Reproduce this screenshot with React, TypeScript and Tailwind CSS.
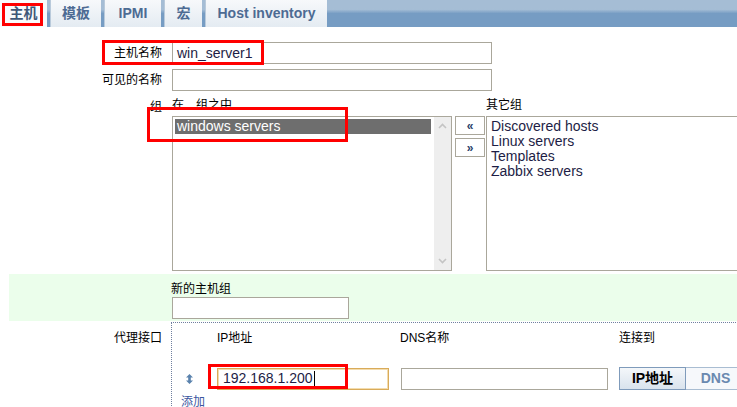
import React from 'react';

const tabs = [
  { label: '主机', w: 'w-[47px]', active: true },
  { label: '模板', w: 'w-[51px]' },
  { label: 'IPMI', w: 'w-[57px]' },
  { label: '宏', w: 'w-[38px]' },
  { label: 'Host inventory', w: 'w-[122px]' },
];

const otherGroups = ['Discovered hosts', 'Linux servers', 'Templates', 'Zabbix servers'];

function Chevron({ up }: { up?: boolean }) {
  return (
    <svg width="9" height="6" viewBox="0 0 9 6" className="block">
      <path d={up ? 'M1 5 L4.5 1.5 L8 5' : 'M1 1 L4.5 4.5 L8 1'} fill="none" stroke="#c4c4c4" strokeWidth="1.6" />
    </svg>
  );
}

function SortHandle() {
  return (
    <svg width="7" height="10" viewBox="0 0 7 10" className="block">
      <path d="M3.5 0 L7 3.5 L0 3.5 Z M3.5 10 L7 6.5 L0 6.5 Z" fill="#5a82ad" />
      <rect x="2.2" y="3" width="2.6" height="4" fill="#5a82ad" />
    </svg>
  );
}

function RedBox({ className }: { className: string }) {
  return <div className={`pointer-events-none absolute border-[3px] border-[#ff0000] ${className}`} />;
}

export default function App() {
  return (
    <div className="relative w-[737px] h-[407px] overflow-hidden bg-white text-black font-['Liberation_Sans','Noto_Sans_CJK_SC',sans-serif]">
      {/* tab bar */}
      <div className="flex h-[27px] bg-linear-to-b from-[#a5bdd5] from-35% to-[#769cc3] to-50%">
        {tabs.map((t, i) => (
          <div
            key={t.label}
            className={`${t.w} shrink-0 ${i > 0 ? 'ml-[3px]' : ''} flex items-center justify-center text-[14px] font-bold ${
              t.active
                ? 'bg-[#f9fbfc] text-[#3f5878]'
                : 'bg-linear-to-b from-[#f7f9fb] to-[#e4ebf2] text-[#4d6b93] border-l border-[#b9cadb]'
            }`}
          >
            {t.label}
          </div>
        ))}
      </div>

      <div className="pt-[15px] text-[12px]">
        {/* host name */}
        <div className="flex items-center h-[22px]">
          <div className="w-[162px] shrink-0 text-right">主机名称</div>
          <div className="ml-[10px] w-[320px] h-[22px] border border-[#aaa79b] flex items-center pl-[4px] text-[14px] text-[#1d1d45]">
            win_server1
          </div>
        </div>

        {/* visible name */}
        <div className="mt-[5px] flex items-center h-[22px]">
          <div className="w-[162px] shrink-0 text-right">可见的名称</div>
          <div className="ml-[10px] w-[320px] h-[22px] border border-[#aaa79b]" />
        </div>

        {/* groups */}
        <div className="mt-[6px] flex">
          <div className="w-[162px] shrink-0 text-right leading-[16px] pt-[2px]">组</div>
          <div className="ml-[10px] flex shrink-0">
            <div className="w-[280px] shrink-0">
              <div className="leading-[16px]">在　组之中</div>
              <div className="mt-[3px] h-[155px] border border-[#aaa79b] flex">
                <div className="flex-1 pt-[2px] pl-[2px] pr-[3px]">
                  <div className="h-[15px] bg-[#6e6e6e] text-white text-[14px] leading-[15px] pl-[2px]">windows servers</div>
                </div>
                <div className="w-[17px] bg-[#eeeeee] flex flex-col items-center justify-between py-[6px]">
                  <Chevron up />
                  <Chevron />
                </div>
              </div>
            </div>
            <div className="ml-[3px] mt-[19px] flex flex-col gap-[3px] shrink-0">
              <div className="w-[30px] h-[19px] border border-[#aaa79b] flex items-center justify-center text-[12px] font-bold text-[#2a3f6a]">«</div>
              <div className="w-[30px] h-[19px] border border-[#aaa79b] flex items-center justify-center text-[12px] font-bold text-[#2a3f6a]">»</div>
            </div>
            <div className="ml-[2px] shrink-0 -translate-x-[1px]">
              <div className="leading-[16px]">其它组</div>
              <div className="mt-[3px] w-[260px] h-[155px] border border-[#aaa79b] pl-[4px] pt-[2px] text-[14px] leading-[15px] text-[#1d1d45]">
                {otherGroups.map((g) => (
                  <div key={g}>{g}</div>
                ))}
              </div>
            </div>
          </div>
        </div>

        {/* new host group */}
        <div className="mt-[3px] ml-[9px] h-[47px] bg-[#ebfeeb] pl-[162px] pt-[8px]">
          <div className="leading-[15px]">新的主机组</div>
          <div className="w-[177px] h-[22px] border border-[#aaa79b] bg-white ml-[1px]" />
        </div>

        {/* agent interfaces */}
        <div className="mt-[1px] flex">
          <div className="w-[162px] shrink-0 text-right pt-[8px] leading-[16px]">代理接口</div>
          <div className="ml-[9px] flex-1 border-t border-l border-dotted border-[#6f7f9f]">
            <div className="grid grid-cols-[45px_184px_218px_1fr] pt-[7px] leading-[16px]">
              <div />
              <div>IP地址</div>
              <div className="-ml-[1px]">DNS名称</div>
              <div>连接到</div>
            </div>
            <div className="mt-[21px] grid grid-cols-[45px_184px_218px_1fr] items-center">
              <div className="pl-[14px]">
                <SortHandle />
              </div>
              <div className="w-[172px] h-[22px] border border-[#d9ab5a] shadow-[inset_0_0_0_1px_#f3dcae] flex items-center pl-[5px] text-[14px] text-[#1d1d45]">
                192.168.1.200<span className="ml-[1px] inline-block w-px h-[15px] bg-black" />
              </div>
              <div className="w-[207px] h-[22px] border border-[#aaa79b]" />
              <div className="flex h-[23px] text-[14px] font-bold">
                <div className="w-[67px] shrink-0 flex items-center justify-center border border-[#7f9bbb] bg-linear-to-b from-[#f4f7fa] to-[#d9e3ed] text-black">IP地址</div>
                <div className="w-[60px] shrink-0 flex items-center justify-center border border-l-0 border-[#a9bdd2] bg-[#f6f8fb] text-[#6a89b0]">DNS</div>
              </div>
            </div>
            <div className="mt-[4px] pl-[9px] leading-[16px] text-[#3b56a0]">添加</div>
          </div>
        </div>
      </div>

      {/* annotation boxes */}
      <RedBox className="left-[2px] top-[3px] w-[41px] h-[23px]" />
      <RedBox className="left-[102px] top-[40px] w-[162px] h-[25px]" />
      <RedBox className="left-[147px] top-[107px] w-[201px] h-[35px]" />
      <RedBox className="left-[208px] top-[364px] w-[140px] h-[25px]" />
    </div>
  );
}
